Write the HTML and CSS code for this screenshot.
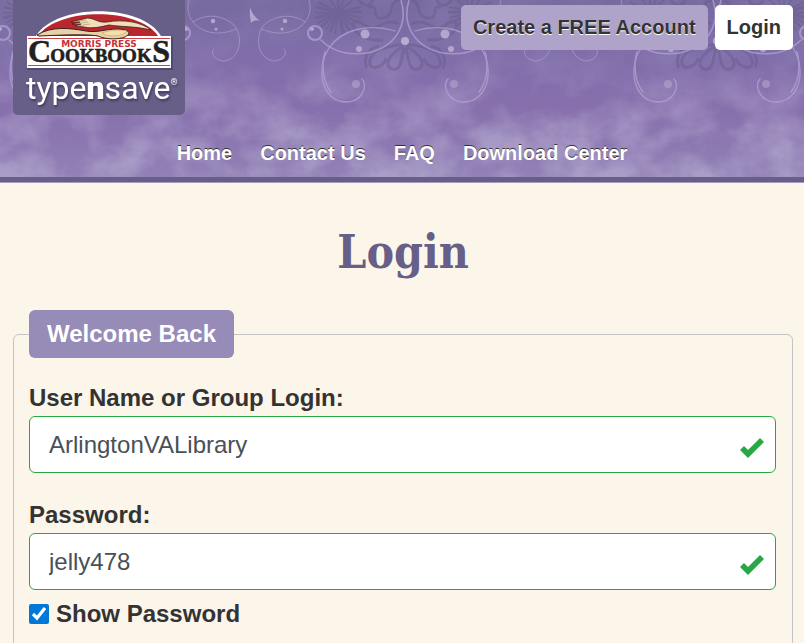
FILE: index.html
```html
<!DOCTYPE html>
<html lang="en">
<head>
    <meta charset="UTF-8">
    <meta name="viewport" content="width=device-width, initial-scale=1.0">
    <title>Login</title>
    <link rel="stylesheet" href="styles.css">
</head>
<body>
    <header class="header">
        <!-- Swirl wallpaper, repeats across the header -->
        <svg class="header-art" width="100%" height="100%" aria-hidden="true">
            <defs>
                <linearGradient id="wash" x1="0" y1="0" x2="0" y2="1">
                    <stop offset="0" stop-color="#776a9f"/>
                    <stop offset="0.3" stop-color="#806eaa"/>
                    <stop offset="0.6" stop-color="#866fac"/>
                    <stop offset="1" stop-color="#9281b6"/>
                </linearGradient>
                <linearGradient id="fade" x1="0" y1="0" x2="0" y2="1">
                    <stop offset="0.3" stop-color="#333"/>
                    <stop offset="0.75" stop-color="#fff"/>
                </linearGradient>
                <mask id="low"><rect width="100%" height="100%" fill="url(#fade)"/></mask>
                <filter id="clouds" x="0" y="0" width="100%" height="100%">
                    <feTurbulence type="fractalNoise" baseFrequency="0.02 0.025" numOctaves="5" seed="8"/>
                    <feColorMatrix values="0 0 0 0 0.58  0 0 0 0 0.54  0 0 0 0 0.74  2.4 0 0 0 -0.8"/>
                </filter>
                <g id="half">
                    <g fill="none" stroke="#655a87" stroke-width="2" opacity="0.45">
                        <path d="M89 12 L89 -12 M89 12 L99 -9 M89 12 L107 -3 M89 12 L112 7 M89 12 L112 18 M89 12 L105 27 M89 12 L96 33 M89 12 L86 34 M89 12 L77 30 M89 12 L69 23 M89 12 L66 13 M89 12 L69 2 M89 12 L77 -8"/>
                        <path d="M89 12 L94 34 M89 12 L101 31 M89 12 L110 23 M89 12 L113 12 M89 12 L81 32 M89 12 L72 27 M89 12 L66 18 M89 12 L67 7" stroke-width="3"/>
                        <path d="M154 0 C136 0 148 16 134 18 S132 2 120 8 M150 24 C132 16 128 36 114 24 S98 42 134 40 M124 0 C120 10 110 4 108 -4" stroke-width="3"/>
                        <path d="M154 44 C142 46 124 48 121 60 S136 68 137 58 M155 46 C140 54 134 66 143 69 S152 60 155 48 M130 46 C118 48 114 60 118 68" stroke-width="3"/>
                    </g>
                    <g fill="none" stroke="#b3a3d2" stroke-linecap="round" opacity="0.75">
                        <path d="M72 40 C86 54 104 55 118 53 C145 48 160 26 152 0" stroke-width="1.5"/>
                        <path d="M146 31 C118 23 92 30 80 48 C66 70 73 102 98 102 C112 102 120 86 113 79" stroke-width="1.3"/>
                        <path d="M76 52 C72 66 74 82 82 92" stroke-width="1.5"/>
                        <path d="M60 0 C66 20 48 34 30 33 C24 33 17 31 13 29" opacity="0.8"/>
                        <path d="M56 22 C42 12 24 16 14 26 C4 42 12 61 26 61 C35 60 39 52 35 49" opacity="0.8"/>
                        <circle cx="66" cy="33" r="7" stroke-width="2"/>
                    </g>
                    <g fill="#b3a5cb">
                        <circle cx="63" cy="29" r="2"/>
                        <circle cx="116" cy="34" r="4.5"/>
                        <circle cx="110" cy="49" r="3"/>
                        <circle cx="107" cy="84" r="4" opacity="0.6"/>
                        <circle cx="36" cy="21" r="2.2"/>
                        <circle cx="33" cy="29" r="1.5"/>
                    </g>
                </g>
                <pattern id="swirls" x="249" y="0" width="312" height="180" patternUnits="userSpaceOnUse">
                    <use href="#half"/>
                    <use href="#half" transform="translate(312 0) scale(-1 1)"/>
                    <circle cx="156" cy="41" r="4" fill="#b9abd2"/>
                    <path d="M1 7 Q3 15 11 21 Q5 19 2 23 Q0 15 1 7Z" fill="#b3a5cf"/>
                </pattern>
            </defs>
            <rect width="100%" height="100%" fill="url(#wash)"/>
            <g mask="url(#low)"><rect width="100%" height="100%" filter="url(#clouds)" opacity="0.45"/></g>
            <rect width="100%" height="100%" fill="url(#swirls)"/>
        </svg>

        <div class="header-top">
            <a class="logo" href="#" aria-label="Morris Press Cookbooks typensave">
                <svg width="172" height="115" viewBox="13 0 172 115">
                    <path d="M27 37 H38 C58 4 141 4 160 37 H173 V70 H27Z" fill="#3c3558" opacity="0.5"/>
                    <path d="M27 36 H36 C56 3 142 3 161 36 H171 V68 H27Z" fill="#fff"/>
                    <path d="M38 36 C58 7 139 7 158 36Z" fill="#b9262e"/>
                    <path d="M28 38.500 H170 M28 65.500 H170" stroke="#c8444a"/>
                    <path d="M37 35 C51 26 70 28 86 31 C98 33 105 29 117 29 C127 29 131 32 128 35 C123 40 106 40 98 36 C87 34 62 35 39 36Z" fill="#e5d2a6" stroke="#3b2020"/>
                    <path d="M102 33 C112 29 123 30 127 31 C125 36 108 38 102 33Z" fill="#f5dfa8" stroke="#b9935a" stroke-width="0.5"/>
                    <path d="M71 22 L87 18 C95 18 97 23 107 22 C123 19 142 22 151 30 C134 26 122 27 109 25 C100 27 92 29 84 27 L75 26 L81 24 L72 24 L80 22Z" fill="#f0dfb9" stroke="#3b2020" stroke-width="0.8"/>
                    <path d="M73 22 L86 20 M75 24 L88 22 M77 26 L90 24" stroke="#b08a5a" stroke-width="0.6"/>
                    <text class="logo-press" x="99" y="47" text-anchor="middle">MORRIS PRESS</text>
                    <text class="logo-books logo-cap" x="28" y="62">C</text>
                    <text class="logo-books" x="101" y="62" text-anchor="middle">OOKBOOK</text>
                    <text class="logo-books logo-cap" x="170" y="62" text-anchor="end">S</text>
                    <text class="logo-type" x="26" y="99">type<tspan class="logo-n">n</tspan>save<tspan class="logo-reg" dy="-14">®</tspan></text>
                </svg>
            </a>
            <div class="account">
                <a class="btn btn-create" href="#">Create a FREE Account</a>
                <a class="btn btn-login" href="#">Login</a>
            </div>
        </div>

        <nav class="nav">
            <a href="#">Home</a>
            <a href="#">Contact Us</a>
            <a href="#">FAQ</a>
            <a href="#">Download Center</a>
        </nav>
    </header>

    <main class="main">
        <h1>Login</h1>
        <form>
            <fieldset class="box">
                <legend>Welcome Back</legend>

                <label for="username">User Name or Group Login:</label>
                <div class="field">
                    <input type="text" id="username" value="ArlingtonVALibrary">
                    <svg class="tick" viewBox="0 0 24 20"><path d="M0 12 L4 8 L8 12 L20 0 L24 4 L8 20Z"/></svg>
                </div>

                <label for="password">Password:</label>
                <div class="field field-password">
                    <input type="text" id="password" value="jelly478">
                    <svg class="tick" viewBox="0 0 24 20"><path d="M0 12 L4 8 L8 12 L20 0 L24 4 L8 20Z"/></svg>
                </div>

                <div class="show">
                    <input type="checkbox" id="show" checked>
                    <label for="show">Show Password</label>
                </div>
            </fieldset>
        </form>
    </main>
</body>
</html>
```
FILE: styles.css
```css
body {
    font-family: "Liberation Sans", Arial, sans-serif;
    background-color: #fcf5e9;
    color: #333;
    margin: 0;
    font-size: 24px;
    line-height: 36px;
    overflow-x: hidden;
}

a {
    text-decoration: none;
}

/* Header */
.header {
    position: relative;
    background-color: #8470ab;
    border-bottom: 5px solid #675f88;
    box-shadow: 0 1px 0 #a79cc0;
    font-size: 20px;
    font-weight: bold;
}

.header-art {
    position: absolute;
    top: 0;
    left: 0;
}

.header-top {
    position: relative;
    display: flex;
    justify-content: space-between;
    align-items: flex-start;
    padding: 0 11px 0 13px;
}

.logo {
    background-color: #675f88;
    border-radius: 0 0 5px 5px;
}

.logo svg {
    display: block;
}

.logo-press {
    font: bold 9px "DejaVu Sans", sans-serif;
    fill: #c8323a;
}

.logo-books {
    font: bold 19px "Liberation Serif", serif;
    fill: #231f20;
    stroke: #231f20;
    stroke-width: 0.6px;
}

.logo-cap {
    font-size: 32px;
}

.logo-type {
    font: 32px Roboto, sans-serif;
    fill: #fff;
    filter: drop-shadow(1px 2px 1px rgba(40, 34, 60, 0.6));
}

.logo-n {
    font-weight: 900;
}

.logo-reg {
    font-size: 9px;
}

.account {
    display: flex;
    gap: 7px;
    padding-top: 5px;
}

.btn {
    padding: 4px 12px 5px;
    border-radius: 5px;
    color: #333;
    text-shadow: 0 1px 0 #fff;
}

.btn-create {
    background-color: #b0a3ca;
}

.btn-login {
    background-color: #fff;
}

.nav {
    position: relative;
    display: flex;
    justify-content: center;
    gap: 28px;
    padding: 20px 0 6px;
}

.nav a {
    color: #fff;
    text-shadow: 0 -1px 0 #333;
}

/* Login form */
.main {
    padding: 40px 11px 20px 13px;
}

h1 {
    margin: 0 0 28px;
    font-family: "DejaVu Serif Condensed", "DejaVu Serif", serif;
    font-size: 46px;
    line-height: 60px;
    text-align: center;
    color: #675f88;
}

.box {
    margin: 0;
    padding: 22px 16px 20px 15px;
    border: 1px solid #c4c4c4;
    border-radius: 6px;
}

legend {
    padding: 10px 18px;
    background-color: #978bb7;
    border-radius: 6px;
    color: #fff;
    font-weight: bold;
    line-height: 28px;
}

label {
    display: block;
    font-weight: bold;
}

.field {
    position: relative;
    margin-bottom: 24px;
}

.field-password {
    margin-bottom: 6px;
}

.field input {
    display: block;
    box-sizing: border-box;
    width: 100%;
    height: 57px;
    padding: 0 48px 0 19px;
    border: 1px solid #28a745;
    border-radius: 6px;
    background-color: #fff;
    color: #495057;
    font: inherit;
}

.tick {
    position: absolute;
    right: 12px;
    top: 22px;
    width: 24px;
    height: 20px;
    fill: #28a745;
}

.show {
    display: flex;
    align-items: center;
    gap: 7px;
}

.show input {
    width: 20px;
    height: 20px;
    margin: 0;
    accent-color: #0078d7;
}
```
